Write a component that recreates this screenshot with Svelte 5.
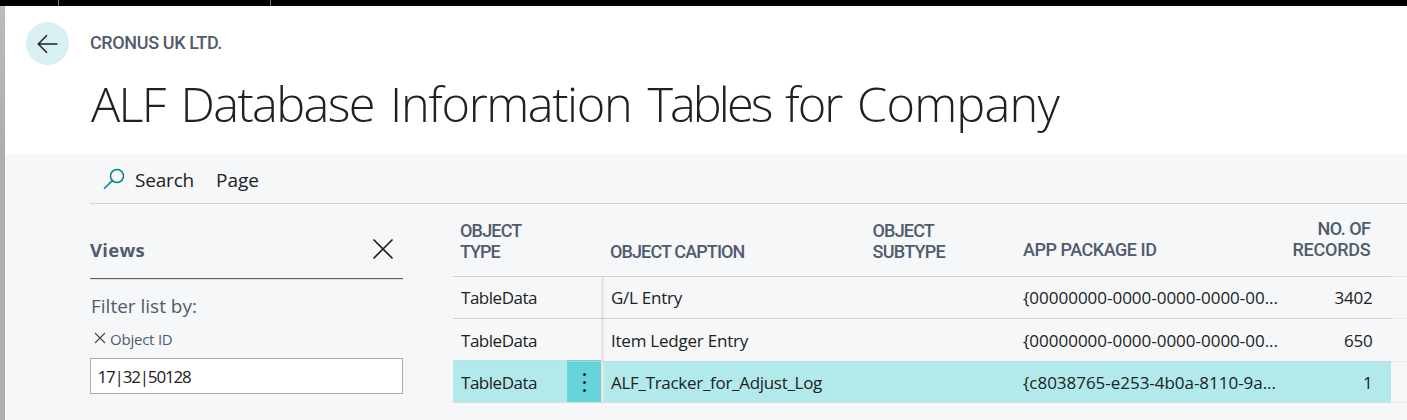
<script>
  const title = [
    { text: 'ALF ', w: 89.5 },
    { text: 'Database ', w: 209.5 },
    { text: 'Information ', w: 257.5 },
    { text: 'Tables ', w: 137.5 },
    { text: 'for ', w: 72 },
    { text: 'Company', w: 202 }
  ];

  const rows = [
    { type: 'TableData', caption: 'G/L Entry', cw: 71, pkg: '{00000000-0000-0000-0000-00...', pw: 255, records: '3402', rw: 38 },
    { type: 'TableData', caption: 'Item Ledger Entry', cw: 137, pkg: '{00000000-0000-0000-0000-00...', pw: 255, records: '650', rw: 28.5 },
    { type: 'TableData', caption: 'ALF_Tracker_for_Adjust_Log', cw: 211, pkg: '{c8038765-e253-4b0a-8110-9a...', pw: 253, records: '1', rw: 9.5, selected: true }
  ];

  // Tracks a label so that it occupies the given width.
  function fit(node, width) {
    const natural = node.getBoundingClientRect().width;
    const n = node.textContent.length;
    node.style.letterSpacing = `${(width - natural) / n}px`;
  }
</script>

<div class="page">
  <div class="topbar"><i></i><i></i></div>
  <div class="frame">
    <div class="edge"></div>
    <div class="content">
      <header>
        <div class="crumb">
          <button class="back" aria-label="Back">
            <svg width="43" height="43" viewBox="0 0 43 43"><path d="M31.5 22H12.5M21 13.3L12.3 22l8.7 8.7" /></svg>
          </button>
          <span class="din" use:fit={132}>CRONUS UK LTD.</span>
        </div>
        <h1>{#each title as t}<span use:fit={t.w}>{t.text}</span>{/each}</h1>
      </header>
      <main>
        <div class="actions">
          <svg width="22" height="22" viewBox="0 0 22 22"><circle cx="14" cy="8" r="6.5" /><path d="M9.3 12.6L1 20.8" /></svg>
          <span class="search" use:fit={59}>Search</span>
          <span use:fit={43}>Page</span>
        </div>
        <div class="body">
          <aside>
            <div class="views">
              <b use:fit={55}>Views</b>
              <svg width="22" height="22" viewBox="0 0 22 22"><path d="M1.5 1.5l19 19M20.5 1.5l-19 19" /></svg>
            </div>
            <div class="filterby"><span use:fit={106}>Filter list by:</span></div>
            <div class="field">
              <svg width="12" height="12" viewBox="0 0 12 12"><path d="M1 1l10 10M11 1L1 11" /></svg>
              <span use:fit={62.5}>Object ID</span>
            </div>
            <div class="input"><span use:fit={93}>17|32|50128</span></div>
          </aside>
          <section>
            <div class="row head">
              <div class="type"><span class="din" use:fit={61.5}>OBJECT</span><span class="din" use:fit={39.5}>TYPE</span></div>
              <div class="menu"></div>
              <div class="caption"><span class="din" use:fit={134.5}>OBJECT CAPTION</span></div>
              <div class="sub"><span class="din" use:fit={61.5}>OBJECT</span><span class="din" use:fit={72.5}>SUBTYPE</span></div>
              <div class="pkg"><span class="din" use:fit={133.5}>APP PACKAGE ID</span></div>
              <div class="rec"><span class="din" use:fit={53}>NO. OF</span><span class="din" use:fit={78}>RECORDS</span></div>
            </div>
            {#each rows as r}
              <div class="row data" class:selected={r.selected}>
                <div class="type"><span use:fit={76}>{r.type}</span></div>
                <div class="menu">{#if r.selected}<i></i><i></i><i></i>{/if}</div>
                <div class="caption"><span use:fit={r.cw}>{r.caption}</span></div>
                <div class="sub"></div>
                <div class="pkg"><span use:fit={r.pw}>{r.pkg}</span></div>
                <div class="rec"><span use:fit={r.rw}>{r.records}</span></div>
                <div class="rest"></div>
              </div>
            {/each}
          </section>
        </div>
      </main>
    </div>
  </div>
</div>

<style>
  :global(body) { overflow: hidden; }
  .page { width: 1407px; height: 420px; display: flex; flex-direction: column; overflow: hidden; background: #fff; color: #212121; font: 17px/24px "Open Sans", sans-serif; }
  .page :global(*) { box-sizing: border-box; }
  span, b { display: inline-block; white-space: pre; }
  svg { fill: none; flex: none; display: block; }
  .topbar { height: 6px; flex: none; background: #000; display: flex; }
  .topbar i { width: 1px; background: #777; margin-left: 58px; }
  .topbar i + i { margin-left: 211px; }
  .frame { flex: 1; display: flex; min-height: 0; }
  .edge { width: 5px; background: linear-gradient(#bcbcbc, #aeaeae 140px); }
  .content { flex: 1; min-width: 0; display: flex; flex-direction: column; }
  header { height: 148px; flex: none; padding: 16px 0 0 21px; }
  .crumb { display: flex; align-items: center; gap: 21px; height: 43px; }
  .crumb .din { margin-bottom: 2px; }
  .back { width: 43px; height: 43px; padding: 0; border: 0; border-radius: 50%; background: #d9f0f2; }
  .back path { stroke: #212121; stroke-width: 1.5; }
  .din { font: 500 18px/21px Roboto, sans-serif; color: #505c6d; }
  h1 { margin: 5px 0 0 65px; font-size: 48.7px; line-height: 66px; font-weight: 300; white-space: nowrap; word-spacing: 5px; }
  main { flex: 1; background: #f5f7f9; padding-left: 85px; }
  .actions { height: 50px; border-bottom: 1px solid #d0d3d6; display: flex; align-items: center; padding: 2px 0 0 13px; font-size: 19px; }
  .actions svg { stroke: #008489; stroke-width: 1.5; margin-top: -1px; }
  .search { margin: 0 22px 0 10px; }
  .body { display: flex; gap: 50px; }
  aside { width: 313px; flex: none; }
  .views { height: 75px; display: flex; justify-content: space-between; align-items: center; padding: 17px 9.5px 0 0; border-bottom: 1px solid #606060; box-shadow: 0 1px 0 #dfe1e3; color: #505c6d; font-size: 18.5px; }
  .views svg { stroke: #212121; stroke-width: 1.7; margin-top: -2px; }
  .filterby { padding: 15px 0 0 1px; height: 46px; color: #505c6d; font-size: 19px; }
  .field { display: flex; align-items: center; gap: 4px; padding-left: 4px; height: 27px; color: #505c6d; font-size: 15px; }
  .field svg { stroke: #444; stroke-width: 1.1; margin-top: -1px; }
  .input { margin-top: 6px; height: 36px; border: 1px solid #a6a8aa; background: #fff; padding: 6px 6.5px; }
  section { flex: 1; min-width: 0; }
  .row { display: flex; height: 42px; }
  .row.head { height: 72px; }
  .head > div { display: flex; flex-direction: column; justify-content: flex-end; align-items: flex-start; padding-bottom: 14px; }
  .head .pkg { padding-bottom: 16px; }
  .head .rec { align-items: flex-end; padding-bottom: 16px; padding-right: 20.5px; }
  .type { width: 114px; padding-left: 7px; }
  .menu { width: 34px; }
  .caption { width: 265px; padding-left: 9px; }
  .sub { width: 150px; padding-left: 6.5px; }
  .pkg { width: 262px; padding-left: 7px; }
  .rec { width: 113px; padding-right: 18.5px; text-align: right; }
  .rest { flex: 1; }
  .data > div { border-top: 1px solid #d0d3d6; line-height: 41px; }
  .data > .type { padding-left: 8px; }
  .data > .caption { padding-left: 10px; box-shadow: inset 3px 0 #e5e5e6; }
  .data:nth-child(3) { height: 43px; }
  .data:nth-child(3) > div { line-height: 43px; }
  .data > .rest { border-color: #e7e9ea; }
  .selected > div { background: #b2eaec; border-bottom: 1px solid #d9dddf; }
  .selected > .rest { background: none; }
  .selected > .type { border-top-color: #c6dcdf; box-shadow: 0 -1px #b2eaec; }
  .selected > .menu { background: #65d4db; box-shadow: 0 -1px #65d4db; border-top-color: #b4d6da; display: flex; flex-direction: column; align-items: center; justify-content: center; gap: 5px; }
  .menu i { width: 3px; height: 3px; border-radius: 50%; background: #212121; }
</style>
